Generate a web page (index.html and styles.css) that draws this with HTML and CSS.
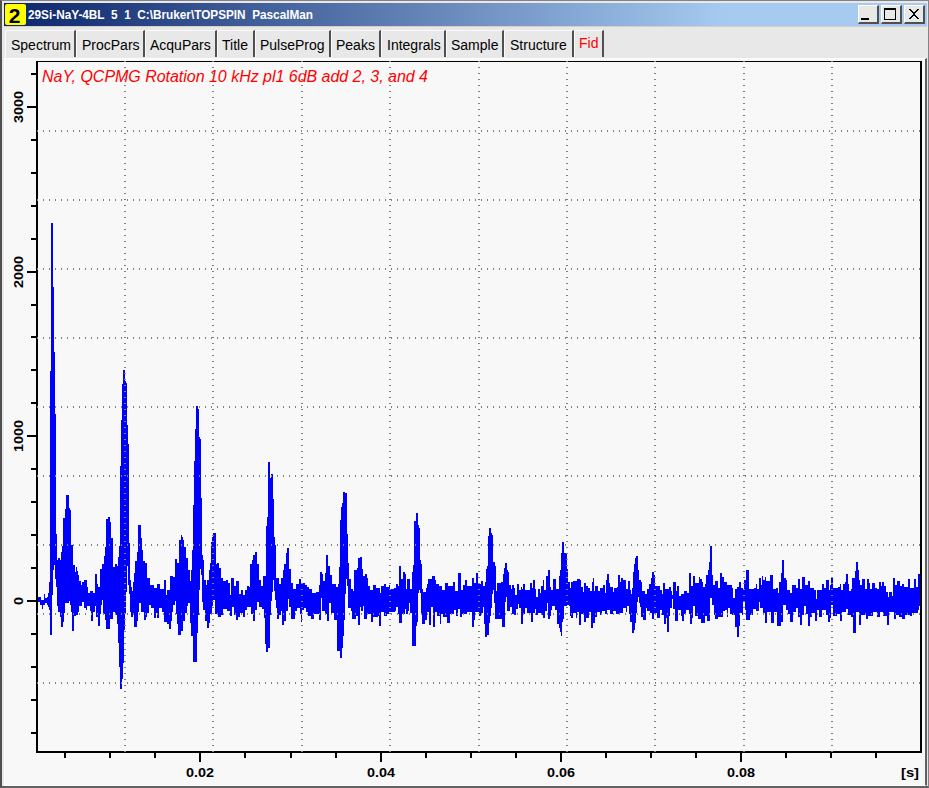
FILE: index.html
```html
<!DOCTYPE html>
<html lang="en">
<head>
    <meta charset="UTF-8">
    <meta name="viewport" content="width=device-width, initial-scale=1.0">
    <title>29Si-NaY-4BL</title>
    <link rel="stylesheet" href="styles.css">
</head>
<body>
    <div class="window">
        <div class="titlebar">
            <span class="badge">2</span>
            <svg class="caption" width="300" height="23">
                <text x="0" y="15" textLength="285" lengthAdjust="spacingAndGlyphs">29Si-NaY-4BL&nbsp; 5&nbsp; 1&nbsp; C:\Bruker\TOPSPIN&nbsp; PascalMan</text>
            </svg>
            <div class="buttons">
                <button aria-label="Minimize"><svg width="18" height="16"><path d="M2 12h8v2h-8z"/></svg></button>
                <button aria-label="Maximize"><svg width="18" height="16"><path fill-rule="evenodd" d="M2 2h12v12h-12zM3 4v9h10v-9z"/></svg></button>
                <button aria-label="Close"><svg width="18" height="16"><path d="M4 3h2v1h1v1h1v1h2v-1h1v-1h1v-1h2v1h-1v1h-1v1h-1v1h-1v2h1v1h1v1h1v1h1v1h-2v-1h-1v-1h-1v-1h-2v1h-1v1h-1v1h-2v-1h1v-1h1v-1h1v-1h1v-2h-1v-1h-1v-1h-1v-1h-1z"/></svg></button>
            </div>
        </div>
        <div class="tabs">
            <div class="tab spectrum">Spectrum</div>
            <div class="tab procpars">ProcPars</div>
            <div class="tab acqupars">AcquPars</div>
            <div class="tab title">Title</div>
            <div class="tab pulseprog">PulseProg</div>
            <div class="tab peaks">Peaks</div>
            <div class="tab integrals">Integrals</div>
            <div class="tab sample">Sample</div>
            <div class="tab structure">Structure</div>
            <div class="tab fid active">Fid</div>
        </div>
        <div class="panel">
            <svg id="plot" width="920" height="724" viewBox="5 59 920 724"></svg>
        </div>
    </div>
    <script src="plot.js"></script>
</body>
</html>
```

FILE: styles.css
```css
* {
    box-sizing: border-box;
}
body {
    margin: 0;
    font-family: "Liberation Sans", Arial, sans-serif;
    background: #e8e8e8;
}
.window {
    width: 929px;
    height: 788px;
    display: flex;
    flex-direction: column;
    border: 1px solid #848284;
    border-left: 2px solid #504e50;
    border-bottom: 2px solid #606060;
    background: #e8e8e8;
    padding: 2px 1px 0 2px;
    overflow: hidden;
}
.titlebar {
    display: flex;
    flex: none;
    height: 24px;
    background: linear-gradient(90deg, #0a246a, #a6caf0 78%);
    border-bottom: 1px solid #d4d0c8;
    padding: 1px 2px 0 1px;
}
.badge {
    width: 21px;
    height: 21px;
    border-radius: 2px;
    background: #ffff00;
    color: #000;
    font-size: 21px;
    font-weight: bold;
    line-height: 23px;
    text-align: center;
    padding-right: 2px;
}
.caption {
    margin-left: 2px;
    fill: #fff;
    font-size: 12px;
    font-weight: bold;
}
.buttons {
    display: flex;
    gap: 2px;
    margin-left: auto;
    padding-top: 1px;
}
button {
    width: 21px;
    height: 19px;
    padding: 0;
    border: 1px solid #fff;
    border-right: 2px solid #505050;
    border-bottom: 2px solid #505050;
    background: #e8e8e8;
}
button svg {
    display: block;
}
.tabs {
    display: flex;
    flex: none;
    height: 30px;
    padding-top: 3px;
    margin-left: 1px;
}
.tab {
    height: 27px;
    border-top: 1px solid #fafafa;
    border-left: 1px solid #fafafa;
    border-right: 2px solid #505050;
    border-radius: 2px 0 0 0;
    padding: 6px 0 0 4px;
    font-size: 14px;
    line-height: 16px;
    color: #000;
    white-space: nowrap;
}
.spectrum {
    width: 71px;
    padding-left: 5px;
}
.procpars {
    width: 69px;
    padding-left: 5px;
}
.acqupars { width: 72px; }
.title { width: 38px; }
.pulseprog { width: 76px; }
.peaks { width: 50px; }
.integrals {
    width: 65px;
    padding-left: 5px;
}
.sample { width: 58px; }
.structure {
    width: 70px;
    padding-left: 5px;
}
.fid { width: 30px; }
.active {
    padding-top: 4px;
    color: #ff0000;
}
.panel {
    flex: 1;
    margin-top: 1px;
    background: #f8f8f8;
    border: 1px solid #fff;
    border-right: 2px solid #606060;
    overflow: hidden;
}
#plot {
    display: block;
}
.axis-label {
    font-size: 13px;
    font-weight: bold;
    text-anchor: middle;
}
.plot-title {
    font-size: 16px;
    font-style: italic;
    fill: #ff0000;
}
```

FILE: plot.js
```javascript
const plot = document.getElementById('plot');

// upper edge of the trace: x y pairs, each held until the next x
const upper = `38 597 41 600 44 594 45 598 47 597 48 593 49 582 50 371 51 223 53 287 54 352 55 414 56 534 57 560 58 558 60 560
61 552 62 546 63 518 65 509 66 495 69 508 70 510 71 545 73 565 75 572 76 567 77 571 78 575 79 581 81 585 82 582 84 580 87 587
88 593 90 591 93 593 95 574 97 584 98 587 100 569 102 564 104 556 105 547 106 519 108 517 110 522 111 538 113 567 115 564
117 566 118 557 119 546 120 466 121 420 122 384 123 370 125 381 126 383 127 425 128 444 129 543 130 580 131 587 132 591
133 582 134 573 135 561 137 552 138 525 141 538 142 550 143 561 145 563 147 578 150 585 154 588 157 584 160 589 164 580
166 595 167 590 170 576 173 577 175 559 177 563 179 540 181 535 182 537 183 540 184 547 186 558 188 570 190 581 191 570
192 550 193 505 194 461 195 429 196 406 198 409 199 437 200 439 201 498 202 555 203 560 204 580 206 585 207 580 209 570
210 563 211 542 212 537 213 533 216 564 217 563 219 568 221 578 223 581 226 580 228 583 230 595 231 578 234 586 236 581
239 594 241 590 243 595 245 590 247 586 249 587 250 564 252 560 253 555 255 552 257 564 259 580 261 586 263 576 266 526
267 517 268 462 270 478 271 474 273 499 274 537 275 545 276 578 279 584 281 578 283 570 284 564 286 553 287 548 289 569
291 583 293 589 296 584 299 579 301 583 305 585 307 587 309 589 312 593 316 592 319 585 320 572 322 574 323 581 325 573
326 555 328 566 330 575 332 584 336 587 338 584 339 567 340 520 341 507 342 503 343 492 345 493 347 534 348 563 349 579
351 589 353 591 354 570 357 568 358 558 360 557 362 569 363 576 365 574 367 578 368 586 370 590 373 585 376 588 380 593
381 586 384 584 386 587 389 585 390 589 394 588 396 584 398 586 399 566 401 579 403 572 405 574 406 589 407 579 410 589
412 572 413 565 414 521 416 513 418 525 419 528 420 560 421 564 422 589 423 592 426 588 427 584 428 579 432 576 435 580
436 584 439 586 442 590 445 583 448 586 453 582 455 591 458 573 461 590 463 585 465 580 467 586 472 578 474 583 476 573
478 584 481 581 483 586 485 582 486 569 487 566 488 536 489 528 491 533 492 535 493 562 495 566 496 591 497 583 501 582
503 574 504 568 505 563 507 570 508 572 509 585 511 589 512 585 514 588 515 595 517 584 519 590 521 587 522 589 523 584
525 590 530 583 532 588 533 580 535 589 536 597 538 589 540 593 541 586 543 580 544 590 546 576 548 570 550 587 551 590
553 579 556 589 559 576 560 570 561 553 562 542 564 553 567 569 568 582 570 588 571 582 573 581 577 579 580 580 581 587
583 592 584 583 586 586 588 588 590 591 592 582 593 578 594 591 595 586 598 591 600 588 603 585 605 593 606 580 607 574
609 583 610 587 613 592 614 588 617 587 618 575 620 582 621 578 623 580 626 589 628 581 630 590 631 594 632 588 633 572
634 564 635 558 636 556 638 570 639 580 641 582 642 591 645 594 647 589 649 584 651 578 652 572 654 575 655 586 660 590
662 594 663 583 665 589 669 587 671 591 672 595 673 582 676 591 677 586 679 596 681 594 684 591 687 593 689 573 691 586
693 576 695 583 699 577 700 579 702 582 703 587 705 584 706 575 708 570 709 562 710 546 712 575 713 585 715 581 718 588
720 573 722 577 724 582 727 585 732 588 733 598 735 589 737 587 739 582 741 588 743 590 744 580 746 570 749 589 754 588
756 584 757 589 759 578 761 585 762 576 763 580 765 577 766 581 770 575 773 589 776 588 778 593 779 582 781 573 782 560
784 578 786 580 787 590 790 593 792 585 796 588 798 579 800 589 802 577 805 585 808 581 810 588 814 590 816 599 817 590
822 584 824 588 826 580 829 590 830 585 831 577 833 588 838 587 840 584 841 590 843 584 845 582 846 574 848 584 849 591
851 589 852 578 855 571 856 562 858 570 859 580 860 585 862 579 865 589 867 579 869 583 870 589 872 583 875 588 877 589
879 582 881 586 882 582 884 586 886 592 888 597 889 592 892 596 893 578 895 585 897 581 900 586 902 584 904 587 908 579
910 588 914 579 916 587 918 574`;

// lower edge
const lower = `38 602 40 605 42 609 43 605 45 603 47 605 48 607 49 610 50 635 52 595 53 570 54 565 55 579 56 587 57 606 58 612
60 617 61 627 63 622 64 613 65 603 69 601 70 605 71 612 72 631 74 616 76 615 78 612 79 606 82 602 84 608 86 610 87 606
90 611 91 621 93 612 95 606 96 617 98 626 100 614 101 605 102 600 103 614 105 620 106 629 110 619 113 612 115 615 117 624
118 643 119 667 120 689 122 679 123 663 124 630 125 614 126 592 127 566 128 585 129 594 130 612 131 617 133 613 134 627
137 621 138 612 139 603 141 612 144 620 146 617 147 613 149 605 151 608 154 618 156 613 157 618 159 608 162 612 164 622
167 624 169 629 171 621 172 612 173 605 175 601 176 614 177 624 178 635 181 631 183 621 185 613 187 606 188 603 190 623
191 636 193 662 197 633 198 615 199 590 200 569 201 575 202 602 203 610 205 621 207 628 209 623 210 614 212 606 213 600
215 614 218 617 221 615 223 609 227 611 230 616 232 607 234 615 236 620 238 617 240 613 243 617 245 610 247 607 251 614
253 621 255 610 257 602 259 607 262 609 264 618 265 644 266 652 268 648 270 615 271 601 272 592 273 580 274 591 275 600
276 608 277 619 279 615 281 611 282 625 284 621 286 611 288 599 289 607 291 619 295 611 297 608 300 614 301 622 302 610
304 608 306 612 308 616 311 619 314 614 319 620 321 598 322 611 325 614 327 621 329 603 331 613 334 620 337 651 340 658
342 648 343 636 344 620 345 594 346 579 347 586 348 608 351 611 352 619 356 616 358 625 360 607 361 611 363 606 364 619
367 614 371 622 373 617 378 616 379 626 381 612 384 616 387 614 389 612 395 611 396 607 398 614 399 623 402 614 405 609
406 614 408 611 409 603 410 613 412 646 416 626 417 622 418 593 419 590 420 593 421 614 422 624 425 620 427 612 429 625
431 607 433 627 435 612 437 616 440 624 441 614 443 617 447 623 450 614 454 610 456 616 458 609 460 617 462 614 467 612
472 627 474 620 475 612 479 616 481 613 483 607 484 624 485 637 487 635 489 623 490 616 491 608 492 594 493 590 494 603
495 619 502 627 505 602 506 597 507 611 510 607 512 614 514 615 516 609 518 604 519 608 521 624 523 614 525 608 527 613
531 622 533 613 535 609 536 615 538 613 541 615 543 618 545 611 547 603 548 619 550 616 551 610 552 606 555 610 557 624
559 628 560 632 561 636 562 622 563 619 564 606 567 605 569 606 570 616 571 618 573 613 576 618 577 612 579 625 581 614
584 622 586 618 589 612 591 628 593 623 595 617 597 612 600 615 602 611 605 614 607 610 610 614 613 611 616 614 620 613
623 608 626 612 627 606 629 614 630 622 632 633 634 630 635 623 636 613 637 602 638 597 639 603 640 607 641 617 643 620
646 608 647 611 650 613 652 619 654 613 657 618 660 610 662 615 664 624 666 618 667 632 669 616 670 608 672 599 673 609
675 621 678 610 681 616 682 621 684 614 686 610 689 614 690 624 692 618 693 606 695 616 698 619 701 623 705 616 707 621
710 598 712 605 714 615 715 619 718 617 723 611 725 610 727 617 728 608 730 614 732 615 735 627 737 637 739 626 740 613
742 615 743 602 745 610 746 620 750 615 753 609 756 611 759 602 760 608 763 613 765 623 767 612 771 623 774 612 777 626
781 622 783 605 786 610 788 614 790 622 793 612 796 608 798 617 800 625 802 615 804 606 806 614 808 626 810 617 812 613
815 621 817 610 819 617 822 610 826 615 828 622 830 618 831 605 833 616 837 614 840 621 842 612 846 609 848 615 851 617
853 633 856 612 859 625 861 615 866 619 868 616 873 612 877 617 880 612 883 616 887 625 889 612 894 619 896 615 899 617
902 619 905 615 910 616 912 613 918 610 919 606`;

function add(name, attrs, text) {
    const el = document.createElementNS('http://www.w3.org/2000/svg', name);
    for (const key in attrs) el.setAttribute(key, attrs[key]);
    if (text) el.textContent = text;
    plot.appendChild(el);
}

// expand the pairs to one y per pixel column
function columns(data) {
    const n = data.trim().split(/\s+/).map(Number);
    const ys = [];
    for (let i = 0; i < n.length; i += 2) {
        const end = n[i + 2] || 920;
        for (let x = n[i]; x < end; x++) ys[x] = n[i + 1];
    }
    return ys;
}

// frame
add('path', { d: 'M36 61H922V753H36ZM38 62V751H920V62Z', 'fill-rule': 'evenodd' });

// fid
const top_ = columns(upper);
const bottom = columns(lower);
let d = '';
for (let x = 38; x < 920; x++) {
    d += `M${x} ${top_[x]}h1V${bottom[x]}h-1z`;
}
add('path', { d: d, fill: '#0000ff', 'shape-rendering': 'crispEdges' });

// ticks
d = '';
const yTicks = [73, 106, 139, 172, 205, 238, 271, 304, 336, 369, 402, 435, 468, 501, 534, 567, 600, 633, 666, 699, 732];
yTicks.forEach((y, i) => {
    const len = i % 5 === 1 ? 9 : 5;
    d += `M${36 - len} ${y}h${len}v2h-${len}z`;
});
const xTicks = [64, 109, 154, 199, 244, 290, 335, 380, 425, 470, 515, 560, 605, 650, 695, 740, 785, 830, 875];
xTicks.forEach((x, i) => {
    const len = i % 4 === 3 ? 9 : 5;
    d += `M${x} 753h2v${len}h-2z`;
});
add('path', { d: d });

// labels
const stretch = 'spacingAndGlyphs';
[[3000, 107], [2000, 272], [1000, 436]].forEach(([v, y]) => {
    add('text', { class: 'axis-label', transform: `translate(23 ${y}) rotate(-90)`, textLength: 32, lengthAdjust: stretch }, String(v));
});
add('text', { class: 'axis-label', transform: 'translate(23 601) rotate(-90)', textLength: 8, lengthAdjust: stretch }, '0');
[['0.02', 200], ['0.04', 381], ['0.06', 561], ['0.08', 741]].forEach(([v, x]) => {
    add('text', { class: 'axis-label', x: x, y: 777, textLength: 28, lengthAdjust: stretch }, v);
});
add('text', { class: 'axis-label', x: 910, y: 777, textLength: 18, lengthAdjust: stretch }, '[s]');
add('text', { class: 'plot-title', x: 42, y: 82, textLength: 386 }, 'NaY, QCPMG Rotation 10 kHz pl1 6dB add 2, 3, and 4');

// dotted grid, over the trace and the title
d = '';
for (const x of [124, 212, 301, 389, 478, 566, 654, 743, 831]) {
    for (let y = 61; y < 753; y += 6) d += `M${x} ${y}h2v1h-2z`;
}
for (const y of [130, 199, 268, 337, 406, 475, 544, 613, 682]) {
    for (let x = 37; x < 921; x += 6) d += `M${x} ${y}h1v2h-1z`;
}
add('path', { d: d, fill: '#808080' });
```
